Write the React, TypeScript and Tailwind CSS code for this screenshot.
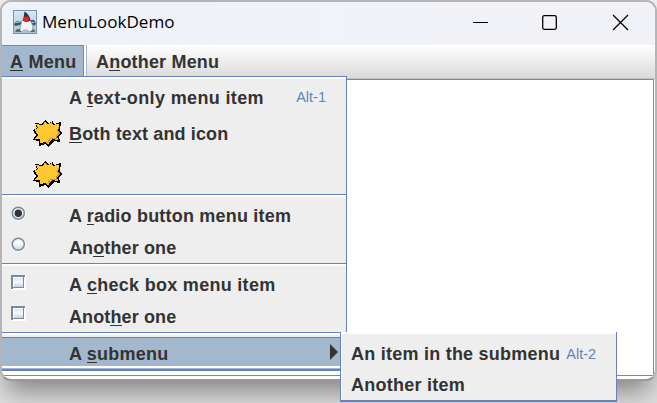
import React from "react";

function M({ children }: { children: React.ReactNode }) {
  return <span className="relative">{children}<i className="absolute inset-x-0 bottom-[1px] h-[1.5px] bg-[#333]" /></span>;
}

function Burst() {
  return (
    <svg width="32" height="30" viewBox="0 0 32 30" shapeRendering="crispEdges">
      <path d="M1 11L5 9 3 4l7 1 3-4 4 3 4-2 1 3 7-2-1 8 2 3-3 3 1 6-6-1-5 6-4-3-6 2 0-5-6-1 3-5z" fill="#000" />
      <path d="M2.500 11L6 9 4 5l6.500 1L13 2.500 16 5l4-2 1 3 6-1.500L26 11l2.500 3L25 17l1 4-6-1-4 5.500-3-2.500-5 1v-4l-5 0 3-4z" fill="#ffc832" />
      <path d="M27 8l-2 4 3 2-4 3 1 3-6-1-4 5" fill="none" stroke="#c8921e" strokeWidth="1" />
    </svg>
  );
}

function Duke() {
  return (
    <svg width="24" height="24" viewBox="0 0 24 24">
      <defs><linearGradient id="dk" x2="0" y2="1"><stop stopColor="#dce8f3" /><stop offset="1" stopColor="#a9c1d4" /></linearGradient></defs>
      <rect x=".5" y=".5" width="23" height="23" fill="url(#dk)" stroke="#7893ad" />
      <path d="M1 14l3-3 5 1-2 3-5 1zM17 10l4 0 2 4-2 2-3-3z" fill="#35556d" />
      <path d="M3 12.500l4-.5M19 12l2 1" stroke="#a8d0ea" strokeWidth="1.200" />
      <path d="M4 19l5 0 0 3H2zM17 20l4-1 1 3h-6z" fill="#5f676e" />
      <path d="M9 10l7-1c3 3 4 7 3.500 11l-3 2-2-2-4 0-2 2-1.500-2z" fill="#f5f5f5" stroke="#888" strokeWidth=".6" />
      <path d="M11.500 1.500c3 1.500 5.500 5.500 6 9l-3 1.500-4.500-1z" fill="#303338" />
      <circle cx="13.300" cy="9.300" r="2.800" fill="#e62222" />
    </svg>
  );
}

function Row({ h, icon, children, accel }: { h: string; icon?: React.ReactNode; children?: React.ReactNode; accel?: string }) {
  return (
    <div className={"flex items-center " + h}>
      <div className="h-full w-[67px] shrink-0">{icon}</div>
      <div className="grow pt-[2px]">{children}</div>
      {accel && <span className="pr-5 text-[14.5px] font-normal text-[#6382bf]">{accel}</span>}
    </div>
  );
}

function Sep() {
  return <div className="h-[5px] border-t border-[#6382bf]"><div className="h-[2px] bg-white" /></div>;
}

function Radio({ on }: { on?: boolean }) {
  return (
    <svg className="ml-[9px] mt-[7px]" width="15" height="15" viewBox="0 0 15 15">
      <defs><linearGradient id="rg" x2="0" y2="1"><stop stopColor="#e4edf6" /><stop offset=".4" stopColor="#fff" /><stop offset="1" stopColor="#bed1e3" /></linearGradient></defs>
      <circle cx="8" cy="8" r="6.5" fill="none" stroke="#fff" />
      <circle cx="7.3" cy="7.3" r="6" fill="url(#rg)" stroke="#7a8a99" strokeWidth="1.5" />
      {on && <circle cx="7.3" cy="7.3" r="3.7" fill="#333" />}
    </svg>
  );
}

function Check() {
  return (
    <div className="ml-[9px] mt-[7px] h-[15px] w-[15px] border-b border-r border-white">
      <div className="h-[14px] w-[14px] border-l-2 border-t-2 border-[#7a8a99] bg-white">
        <div className="h-[11px] w-[11px] border-b border-r border-[#7a8a99] bg-white pl-px pt-px">
          <div className="h-full w-full bg-linear-to-b from-[#dde8f3] via-[#f4f8fc] to-[#bfd2e4]" />
        </div>
      </div>
    </div>
  );
}

export default function App() {
  return (
    <div className="relative h-[403px] w-[657px] overflow-hidden bg-linear-to-b from-[#eee] from-80% to-[#dedede] font-['Liberation_Sans',Arial,sans-serif] text-[18px] leading-[22px] font-bold whitespace-nowrap text-[#333]">
      <div className="flex h-[381px] w-[657px] flex-col overflow-hidden rounded-[11px] border-2 border-[#b5b5b5] border-b-[#999] bg-white shadow-[0_16px_26px_-6px_#808080]">
        <header className="flex h-[43px] shrink-0 items-center bg-linear-to-r from-[#eef3f9] to-[#f1f2f8] pb-[3px] pl-[11px] text-black">
          <Duke />
          <span className="ml-[5px] grow font-['Open_Sans','Noto_Sans',sans-serif] text-[17.1px] font-normal">MenuLookDemo</span>
          <svg width="184" height="40" viewBox="0 0 184 40" fill="none" stroke="#000" strokeWidth="1.3">
            <path d="M2 20.5h15" strokeWidth="1" />
            <rect x="71.7" y="13.7" width="13.6" height="13.6" rx="1.5" />
            <path d="M142 13l15 15M157 13l-15 15" />
          </svg>
        </header>
        <nav className="flex h-[33px] shrink-0 bg-linear-to-b from-white to-[#dadada]">
          <div className="flex h-[31px] w-[82px] items-center border-r border-t border-[#7a8a99] bg-[#a3b8cc] pl-2 pt-[2px] tracking-[0.25px]"><span><M>A</M> Menu</span></div>
          <div className="h-[31px] w-[2px] bg-white" />
          <div className="h-[31px] border-l border-[#a3b8cc] pl-[9px] pt-[6px] tracking-[0.18px]">A<M>n</M>other Menu</div>
        </nav>
        <div className="h-px shrink-0 bg-[#c4c4c4]" />
        <div className="mr-px h-[297px] border-b border-r border-t border-[#7a8a99] bg-white" />
      </div>

      <div className="absolute left-[2px] top-[76px] flex h-[295px] w-[345px] flex-col border-b-2 border-r border-t border-[#6382bf] bg-[#eee]">
        <div className="mb-[2px] h-[2px] shrink-0 bg-white" />
        <Row h="h-[32px]" accel="Alt-1"><span className="tracking-[0.36px]">A <M>t</M>ext-only menu item</span></Row>
        <Row h="h-[40px]" icon={<div className="pl-[30px] pt-[6px]"><Burst /></div>}><span className="tracking-[0.13px]"><M>B</M>oth text and icon</span></Row>
        <Row h="h-[41px]" icon={<div className="pl-[30px] pt-[7px]"><Burst /></div>} />
        <Sep />
        <Row h="h-[32px]" icon={<Radio on />}><span className="tracking-[0.2px]">A <M>r</M>adio button menu item</span></Row>
        <Row h="h-[32px]" icon={<div className="-mt-px"><Radio /></div>}><span className="tracking-[0.12px]">An<M>o</M>ther one</span></Row>
        <Sep />
        <Row h="h-[32px]" icon={<Check />}><span className="tracking-[0.29px]">A <M>c</M>heck box menu item</span></Row>
        <Row h="h-[32px]" icon={<div className="-mt-px"><Check /></div>}><span className="tracking-[0.12px]">Anot<M>h</M>er one</span></Row>
        <Sep />
        <div className="flex h-[29px] shrink-0 items-center border-t border-[#6382bf] bg-[#a3b8cc] pl-[67px] pt-[4px] tracking-[0.25px]">
          <span className="grow">A <M>s</M>ubmenu</span>
          <svg className="-mt-[4px] mr-[8px]" width="9" height="16" viewBox="0 0 9 16"><path d="M1 0v16l8-8z" fill="#333" /></svg>
        </div>
        <div className="grow border-b border-[#a3b8cc] bg-white" />
      </div>

      <div className="absolute left-[340px] top-[332px] h-[70px] w-[277px] border-b-2 border-l border-r border-[#6382bf] bg-[#eee]">
        <div className="h-full border-l border-t-2 border-white pl-[9px] pt-[3px]">
          <div className="flex h-[32px] items-center pt-px"><span className="tracking-[0.24px]">An item in the submenu</span><span className="ml-[6px] text-[14.5px] font-normal text-[#6382bf]">Alt-2</span></div>
          <div className="flex h-[31px] items-center tracking-[0.25px]">Another item</div>
        </div>
      </div>
    </div>
  );
}
